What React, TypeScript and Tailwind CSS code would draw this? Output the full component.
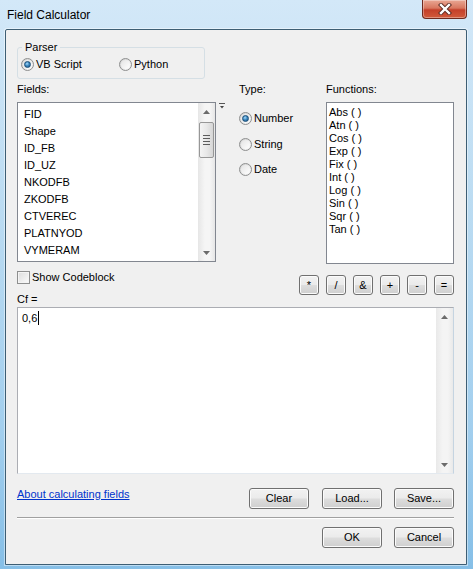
import React from "react";

const fieldNames = ["FID", "Shape", "ID_FB", "ID_UZ", "NKODFB", "ZKODFB", "CTVEREC", "PLATNYOD", "VYMERAM"];
const functions = ["Abs ( )", "Atn ( )", "Cos ( )", "Exp ( )", "Fix ( )", "Int ( )", "Log ( )", "Sin ( )", "Sqr ( )", "Tan ( )"];
const operators = ["*", "/", "&", "+", "-", "="];

// Win7 style radio button
function Radio({ checked = false }: { checked?: boolean }) {
    return (
        <span className="flex h-[13px] w-[13px] shrink-0 items-center justify-center rounded-full border border-[#8e8f8f] bg-[linear-gradient(135deg,#d0d0d0,#f9f9f9)]">
            <span className="flex h-[9px] w-[9px] items-center justify-center rounded-full bg-[linear-gradient(135deg,#e4e4e4,#ffffff)]">
                {checked && (
                    <span className="h-[7px] w-[7px] rounded-full border border-[#1b4e78] bg-[radial-gradient(circle_at_40%_35%,#a9dbfb_0%,#3d89c0_45%,#174f80_100%)]" />
                )}
            </span>
        </span>
    );
}

function Btn({ children, className = "" }: { children: React.ReactNode; className?: string }) {
    return (
        <div
            className={`flex items-center justify-center rounded-[3px] border border-[#707070] bg-[linear-gradient(#f2f2f2_0%,#ebebeb_48%,#dddddd_52%,#cfcfcf_100%)] shadow-[inset_0_0_0_1px_#fbfbfb] text-black ${className}`}
        >
            {children}
        </div>
    );
}

function UpArrow() {
    return (
        <svg width="7" height="4" viewBox="0 0 7 4">
            <path d="M0 4 L3.5 0 L7 4 Z" fill="#6b6b6b" />
        </svg>
    );
}

function DownArrow() {
    return (
        <svg width="7" height="4" viewBox="0 0 7 4">
            <path d="M0 0 L3.5 4 L7 0 Z" fill="#6b6b6b" />
        </svg>
    );
}

export default function App() {
    return (
        <div className="flex h-[569px] w-[473px] flex-col bg-[linear-gradient(180deg,#d3e8f8_0%,#bcdcf2_35%,#a3cfee_75%,#86bfe7_100%)] font-['Liberation_Sans',Arial,sans-serif] text-[11px] text-black">
            {/* title bar */}
            <div className="flex h-[29px] shrink-0 items-start justify-between">
                <span className="pl-[7px] pt-[7px] text-[12px] leading-[16px] text-black">Field Calculator</span>
                <div className="mr-[6px] flex h-[19px] w-[45px] items-center justify-center rounded-b-[4px] border border-t-0 border-[#6e2a1f] bg-[linear-gradient(#e9a794_0%,#d8775f_45%,#c4402a_55%,#d15a3b_100%)] shadow-[inset_0_0_0_1px_rgba(255,255,255,0.35)]">
                    <svg width="14" height="12" viewBox="0 0 14 12">
                        <path d="M3 2 L11 10 M11 2 L3 10" stroke="#5a2a22" strokeWidth="4.2" strokeLinecap="square" />
                        <path d="M3 2 L11 10 M11 2 L3 10" stroke="#ffffff" strokeWidth="2.4" strokeLinecap="square" />
                    </svg>
                </div>
            </div>

            {/* client area */}
            <div className="ml-[5px] flex h-[536px] w-[462px] flex-col rounded-t-[2px] border border-[#3d5e74] bg-[#f0f0f0] pl-[11px] pr-[12px] shadow-[0_0_0_1px_rgba(255,255,255,0.45)]">
                {/* Parser */}
                <fieldset className="mt-[11px] w-[188px] rounded-[3px] border border-[#d5dfe5] px-[3px] pb-[6px]">
                    <legend className="ml-[1px] px-[3px] leading-[13px]">Parser</legend>
                    <div className="mt-[2px] flex h-[16px] items-center">
                        <div className="flex w-[98px] items-center gap-[2px]">
                            <Radio checked />
                            <span>VB Script</span>
                        </div>
                        <div className="flex items-center gap-[2px]">
                            <Radio />
                            <span>Python</span>
                        </div>
                    </div>
                </fieldset>

                {/* Fields / Type / Functions */}
                <div className="mt-[4px] flex">
                    <div className="flex w-[222px] flex-col">
                        <span className="mb-[6px] leading-[13px]">Fields:</span>
                        <div className="flex items-start">
                            <div className="flex h-[160px] w-[199px] border border-[#828790] bg-white">
                                <div className="flex flex-1 flex-col pl-[6px] pt-[3px] leading-[17px]">
                                    {fieldNames.map((f) => (
                                        <span key={f}>{f}</span>
                                    ))}
                                </div>
                                <div className="flex w-[17px] flex-col items-center bg-[linear-gradient(90deg,#e6e6e6,#f5f5f5_40%,#f5f5f5_70%,#e6e6e6)]">
                                    <div className="flex h-[17px] items-center justify-center">
                                        <UpArrow />
                                    </div>
                                    <div className="mt-[2px] flex h-[36px] w-[15px] flex-col items-center justify-center gap-[2px] rounded-[2px] border border-[#979797] bg-[linear-gradient(90deg,#f4f4f4,#e8e8e8_50%,#d6d6d6)]">
                                        <span className="h-px w-[7px] bg-[#5c5c5c]" />
                                        <span className="h-px w-[7px] bg-[#5c5c5c]" />
                                        <span className="h-px w-[7px] bg-[#5c5c5c]" />
                                        <span className="h-px w-[7px] bg-[#5c5c5c]" />
                                    </div>
                                    <div className="flex-1" />
                                    <div className="flex h-[17px] items-center justify-center">
                                        <DownArrow />
                                    </div>
                                </div>
                            </div>
                            <svg className="ml-[3px] mt-[1px]" width="6" height="6" viewBox="0 0 6 6">
                                <path d="M0 0.5 H6" stroke="#555" strokeWidth="1" />
                                <path d="M1 3 L3 5.5 L5 3 Z" fill="#444" />
                            </svg>
                        </div>
                    </div>

                    <div className="flex w-[87px] flex-col">
                        <span className="leading-[13px]">Type:</span>
                        <div className="mt-[14px] flex h-[16px] items-center gap-[2px]">
                            <Radio checked />
                            <span>Number</span>
                        </div>
                        <div className="mt-[10px] flex h-[16px] items-center gap-[2px]">
                            <Radio />
                            <span>String</span>
                        </div>
                        <div className="mt-[9px] flex h-[16px] items-center gap-[2px]">
                            <Radio />
                            <span>Date</span>
                        </div>
                    </div>

                    <div className="flex w-[128px] flex-col">
                        <span className="mb-[6px] leading-[13px]">Functions:</span>
                        <div className="flex h-[162px] flex-col border border-[#828790] bg-white pl-[2px] pt-[3px] leading-[13px]">
                            {functions.map((f) => (
                                <span key={f}>{f}</span>
                            ))}
                        </div>
                    </div>
                </div>

                {/* codeblock + operators */}
                <div className="flex items-start justify-between">
                    <div className="flex flex-col">
                        <div className="mt-[7px] flex h-[13px] items-center gap-[2px]">
                            <span className="h-[13px] w-[13px] border border-[#8e8f8f] bg-[linear-gradient(135deg,#dcdcdc,#fbfbfb)] shadow-[inset_0_0_0_1px_#f4f4f4]" />
                            <span>Show Codeblock</span>
                        </div>
                        <span className="mt-[9px] leading-[13px]">Cf =</span>
                    </div>
                    <div className="mt-[11px] flex gap-[7px]">
                        {operators.map((o) => (
                            <Btn key={o} className="h-[20px] w-[20px] leading-none">
                                {o}
                            </Btn>
                        ))}
                    </div>
                </div>

                {/* expression box */}
                <div className="mt-[1px] flex h-[167px] border border-[#abadb3] border-r-[#c5d4e1] border-b-[#e3e9ef] bg-white">
                    <div className="flex flex-1 items-start pl-[4px] pt-[3px] leading-[14px]">
                        <span>0,6</span>
                        <span className="ml-px h-[14px] w-px bg-black" />
                    </div>
                    <div className="flex w-[17px] flex-col items-center bg-[linear-gradient(90deg,#e9e9e9,#f4f4f4_40%,#f4f4f4_70%,#e9e9e9)]">
                        <div className="flex h-[17px] items-center justify-center">
                            <UpArrow />
                        </div>
                        <div className="flex-1" />
                        <div className="flex h-[17px] items-center justify-center">
                            <DownArrow />
                        </div>
                    </div>
                </div>

                {/* link + file buttons */}
                <div className="mt-[14px] flex items-start">
                    <span className="leading-[13px] text-[#0033cc] underline">About calculating fields</span>
                    <div className="ml-auto flex">
                        <Btn className="h-[21px] w-[60px]">Clear</Btn>
                        <Btn className="ml-[13px] h-[21px] w-[60px]">Load...</Btn>
                        <Btn className="ml-[12px] h-[21px] w-[60px]">Save...</Btn>
                    </div>
                </div>

                <div className="mt-[8px] h-px bg-[#a0a0a0]" />
                <div className="h-px bg-white" />

                <div className="mt-[8px] flex justify-end gap-[12px]">
                    <Btn className="h-[21px] w-[60px]">OK</Btn>
                    <Btn className="h-[21px] w-[60px]">Cancel</Btn>
                </div>
            </div>
        </div>
    );
}
